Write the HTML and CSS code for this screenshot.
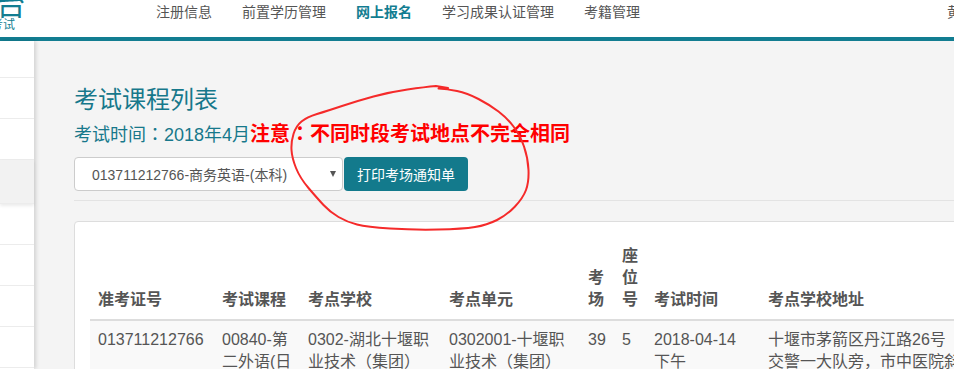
FILE: index.html
```html
<!DOCTYPE html>
<html lang="zh-CN">
<head>
<meta charset="utf-8">
<title>考试课程列表</title>
<link rel="stylesheet" href="styles.css">
</head>
<body>
<header class="topbar">
  <div class="logo">
    <div class="logo-main">自考平台</div>
    <div class="logo-sub">湖北省高等教育自学考试</div>
  </div>
  <nav class="nav">
    <a class="nav-item">注册信息</a>
    <a class="nav-item">前置学历管理</a>
    <a class="nav-item active">网上报名</a>
    <a class="nav-item">学习成果认证管理</a>
    <a class="nav-item">考籍管理</a>
  </nav>
  <div class="user">黄同学</div>
</header>
<div class="layout">
  <aside class="sidebar">
    <ul class="side-list">
      <li class="side-item first"></li>
      <li class="side-item"></li>
      <li class="side-item"></li>
      <li class="side-item active"></li>
      <li class="side-item"></li>
      <li class="side-item"></li>
      <li class="side-item"></li>
      <li class="side-item"></li>
    </ul>
  </aside>
  <main class="main">
    <h1 class="page-title">考试课程列表</h1>
    <div class="exam-time">考试时间<span class="colon" lang="zh-Hant">：</span>2018年4月<strong class="notice">注意<span class="colon" lang="zh-Hant">：</span>不同时段考试地点不完全相同</strong></div>
    <div class="toolbar">
      <div class="select"><span class="select-text">013711212766-商务英语-(本科)</span><span class="caret"></span></div>
      <button class="btn">打印考场通知单</button>
    </div>
    <hr class="divider">
    <div class="card">
      <table class="grid">
        <colgroup>
          <col class="c1"><col class="c2"><col class="c3"><col class="c4"><col class="c5"><col class="c6"><col class="c7"><col class="c8">
        </colgroup>
        <thead>
          <tr>
            <th>准考证号</th>
            <th>考试课程</th>
            <th>考点学校</th>
            <th>考点单元</th>
            <th>考场</th>
            <th>座位号</th>
            <th>考试时间</th>
            <th>考点学校地址</th>
          </tr>
        </thead>
        <tbody>
          <tr>
            <td>013711212766</td>
            <td>00840-第二外语(日语)</td>
            <td>0302-湖北十堰职业技术（集团）学院</td>
            <td>0302001-十堰职业技术（集团）学院</td>
            <td>39</td>
            <td>5</td>
            <td>2018-04-14 下午</td>
            <td class="addr">十堰市茅箭区丹江路26号（交警一大队旁，市中医院斜对面）</td>
          </tr>
        </tbody>
      </table>
    </div>
  </main>
</div>
<svg class="annotation" width="954" height="369" viewBox="0 0 954 369">
  <path d="M438.5,88.5 Q447,89 457,91 Q467,93 478.5,99 Q490,105 498.5,111.5 Q507,118 513.5,126.5 Q520,135 524,146.5 Q528,158 528.5,170 Q529,182 526,190 Q523,198 515,206.5 Q507,215 497,220 Q487,225 475,227 Q463,229 438,229.5 Q413,230 390,228.5 Q367,227 357,224.5 Q347,222 338.5,217 Q330,212 323.5,205 Q317,198 308.5,188 Q300,178 296,168 Q292,158 291.5,150 Q291,142 293.5,134 Q296,126 301.5,121.5 Q307,117 317,114 Q327,111 342,106 Q357,101 373.5,96.5 Q390,92 407.5,89.5 Q425,87 436,86 L448,88" fill="none" stroke="#f52a2a" stroke-width="2" stroke-linecap="round" stroke-linejoin="round"/>
</svg>
</body>
</html>
```
FILE: styles.css
```css
html, body {
  margin: 0;
  padding: 0;
  overflow: hidden;
}
body {
  position: relative;
  width: 954px;
  height: 369px;
  background: #f4f4f4;
  font-family: "Liberation Sans", "Noto Sans CJK SC", sans-serif;
  color: #555;
}

/* header */
.topbar {
  display: flex;
  align-items: flex-start;
  height: 37px;
  background: #fff;
  border-bottom: 4px solid #127d91;
}
.logo {
  flex: none;
  width: 160px;
  margin-left: -134px;
  margin-right: 115px;
  text-align: right;
  color: #127d91;
}
.logo-main {
  font-size: 30px;
  line-height: 28px;
  margin-top: -9px;
  white-space: nowrap;
}
.logo-sub {
  font-size: 12px;
  line-height: 14px;
  margin-top: -1px;
  padding-right: 11px;
  white-space: nowrap;
}
.nav {
  display: flex;
}
.nav-item {
  padding: 0 15px;
  font-size: 14px;
  line-height: 25px;
  color: #555;
  white-space: nowrap;
}
.nav-item.active {
  color: #127d91;
  font-weight: bold;
}
.user {
  flex: none;
  margin-left: auto;
  margin-right: -35px;
  font-size: 14px;
  line-height: 25px;
  color: #555;
  white-space: nowrap;
}

/* body layout */
.layout {
  display: flex;
  height: 328px;
}
.sidebar {
  flex: none;
  width: 34px;
  background: #fff;
  box-shadow: 2px 0 4px rgba(0, 0, 0, 0.14);
  position: relative;
  z-index: 1;
}
.side-list {
  list-style: none;
  margin: 0;
  padding: 0;
}
.side-item {
  height: 40px;
  border-bottom: 1px solid #ececec;
}
.side-item.first {
  height: 36px;
}
.side-item.active {
  height: 43px;
  background: #f2f2f2;
  box-shadow: 0 2px 3px rgba(0, 0, 0, 0.08);
}

.main {
  flex: none;
  width: 920px;
  padding-left: 40px;
}
.page-title {
  margin: 42px 0 0;
  font-size: 24px;
  line-height: 34px;
  font-weight: normal;
  color: #17788b;
}
.exam-time {
  margin-top: 2px;
  font-size: 18px;
  line-height: 28px;
  color: #17788b;
  white-space: nowrap;
}
.colon {
  font-family: "Noto Sans CJK TC", "Noto Sans CJK SC", sans-serif;
}
.notice {
  font-size: 20px;
  font-weight: bold;
  color: #ff0000;
}
.toolbar {
  display: flex;
  gap: 1px;
  margin-top: 8px;
}
.select {
  box-sizing: border-box;
  width: 269px;
  height: 34px;
  display: flex;
  align-items: center;
  justify-content: space-between;
  padding: 0 6px 0 17px;
  background: #fff;
  border: 1px solid #ccc;
  border-radius: 4px;
  font-size: 14px;
  color: #555;
}
.caret {
  width: 0;
  height: 0;
  border-left: 3px solid transparent;
  border-right: 3px solid transparent;
  border-top: 6px solid #555;
}
.btn {
  box-sizing: border-box;
  width: 124px;
  height: 34px;
  padding: 0;
  border: 0;
  border-radius: 4px;
  background: #137a8c;
  color: #fff;
  font-family: inherit;
  font-size: 14px;
}
.divider {
  margin: 9px 0 0;
  height: 0;
  border: 0;
  border-top: 1px solid #e3e3e3;
}
.card {
  margin-top: 20px;
  padding: 15px 15px 20px;
  background: #fff;
  border: 1px solid #ddd;
  border-radius: 4px;
}
.grid {
  table-layout: fixed;
  width: 886px;
  border-collapse: collapse;
  font-size: 16px;
  line-height: 22px;
  color: #555;
}
.c1 { width: 124px; }
.c2 { width: 86px; }
.c3 { width: 141px; }
.c4 { width: 139px; }
.c5 { width: 34px; }
.c6 { width: 32px; }
.c7 { width: 114px; }
.c8 { width: 216px; }
.grid th {
  padding: 8px;
  text-align: left;
  vertical-align: bottom;
  font-weight: bold;
  border-bottom: 2px solid #ddd;
}
.grid td {
  padding: 8px;
  vertical-align: top;
  background: #f9f9f9;
  border-top: 1px solid #ddd;
}
.grid td.addr {
  line-break: anywhere;
}

.annotation {
  position: absolute;
  left: 0;
  top: 0;
  pointer-events: none;
  z-index: 5;
}
```
